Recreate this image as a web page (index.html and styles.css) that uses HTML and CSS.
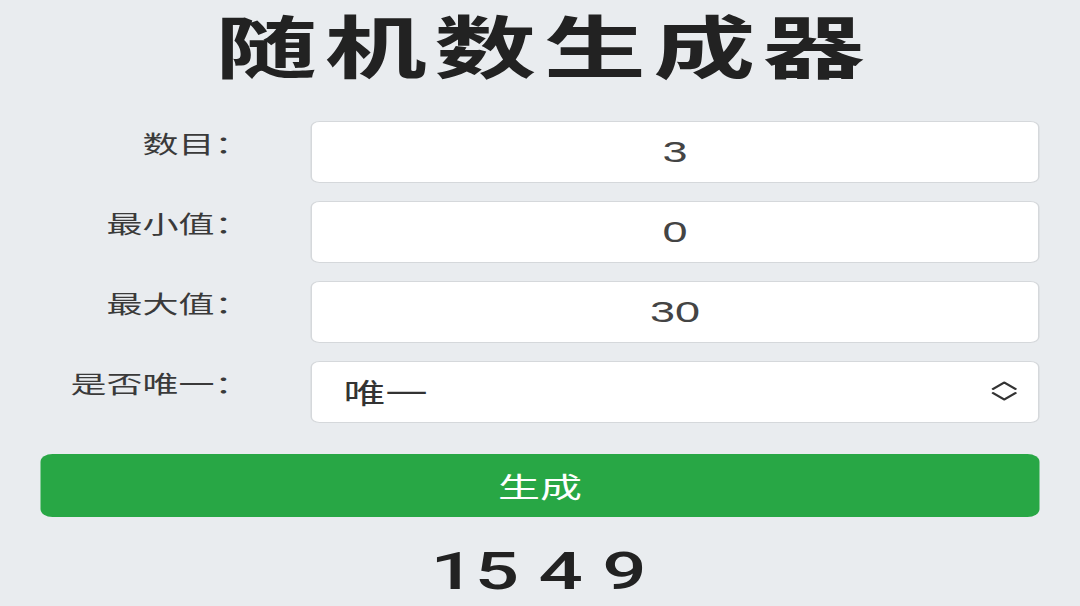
FILE: index.html
```html
<!DOCTYPE html>
<html lang="zh-CN">
<head>
<meta charset="utf-8">
<title>随机数生成器</title>
<link rel="stylesheet" href="styles.css">
</head>
<body>
<main class="page">
  <h1 class="title">随机数生成器</h1>
  <form class="form">
    <div class="row">
      <label class="label" for="count">数目：</label>
      <input class="field" id="count" type="text" value="3">
    </div>
    <div class="row">
      <label class="label" for="min">最小值：</label>
      <input class="field" id="min" type="text" value="0">
    </div>
    <div class="row">
      <label class="label" for="max">最大值：</label>
      <input class="field" id="max" type="text" value="30">
    </div>
    <div class="row">
      <label class="label" for="unique">是否唯一：</label>
      <div class="select-wrap">
        <select class="select" id="unique">
          <option>唯一</option>
          <option>不唯一</option>
        </select>
        <svg class="chevron" viewBox="0 0 19 24" width="19" height="24" aria-hidden="true">
          <path d="M2 10 L9.5 3.5 L17 10" fill="none" stroke="#333" stroke-width="1.8" stroke-linecap="round" stroke-linejoin="round"/>
          <path d="M2 14 L9.5 20.5 L17 14" fill="none" stroke="#333" stroke-width="1.8" stroke-linecap="round" stroke-linejoin="round"/>
        </svg>
      </div>
    </div>
    <button class="btn" type="button">生成</button>
  </form>
  <div class="result">15 4 9</div>
</main>
</body>
</html>
```

FILE: styles.css
```css
html, body {
  margin: 0;
  padding: 0;
  background: #e9ecef;
}

body {
  font-family: "Noto Sans CJK SC", "Noto Sans", sans-serif;
  color: #333;
}

/* The page is laid out on a 720px-wide mobile canvas and shown stretched to the 1080px window */
.page {
  width: 720px;
  box-sizing: border-box;
  padding: 0 27px;
  transform: scaleX(1.5);
  transform-origin: 0 0;
}

.title {
  margin: 0;
  padding-left: 5px;
  text-align: center;
  font-size: 68px;
  line-height: 88px;
  letter-spacing: 5px;
  font-weight: 700;
  color: #222;
}

.form {
  margin-top: 33px;
  display: flex;
  flex-direction: column;
  gap: 18px;
}

.row {
  display: grid;
  grid-template-columns: 140px 1fr;
  column-gap: 40px;
  height: 62px;
}

.label {
  text-align: right;
  font-size: 24px;
  line-height: 24px;
  padding-top: 10px;
  color: #3a3a3a;
  white-space: nowrap;
}

.field,
.select {
  box-sizing: border-box;
  width: 100%;
  height: 62px;
  margin: 0;
  border: 1px solid #d5d8db;
  border-radius: 6px;
  background: #fff;
  outline: none;
}

.field {
  text-align: center;
  font-family: "Liberation Sans", Arial, sans-serif;
  font-size: 30px;
  color: #444;
  padding: 0 10px;
}

.select-wrap {
  position: relative;
}

.select {
  appearance: none;
  -webkit-appearance: none;
  font-family: "Noto Sans CJK SC", sans-serif;
  font-size: 28px;
  color: #333;
  padding: 0 40px 0 21px;
}

.chevron {
  position: absolute;
  right: 14px;
  top: 18px;
  pointer-events: none;
}

.btn {
  margin-top: 13px;
  height: 63px;
  width: 100%;
  border: none;
  border-radius: 8px;
  background: #28a745;
  color: #fff;
  font-family: "Noto Sans CJK SC", sans-serif;
  font-size: 28px;
}

.result {
  margin-top: 29px;
  padding-right: 2px;
  text-align: center;
  font-family: Roboto, "Liberation Sans", sans-serif;
  font-weight: 500;
  font-size: 52px;
  line-height: 52px;
  color: #222;
}
```
